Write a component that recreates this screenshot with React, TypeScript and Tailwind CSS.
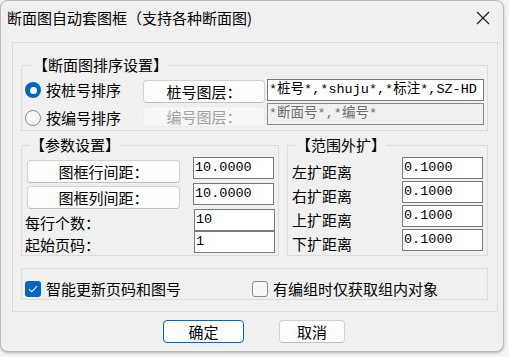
import React from "react";

const cjk = "font-['Noto_Sans_CJK_SC',sans-serif]";
const mono = "font-['Liberation_Mono','Noto_Sans_CJK_SC',monospace]";

const btn =
  "flex items-center justify-center rounded-[4px] border border-[#d2d2d2] border-b-[#c0c0c0] bg-[#fdfdfd] text-[15px] leading-[20px] text-black";

const inputBox =
  "h-[22px] border border-[#7a7a7a] bg-white pl-[1px] text-[13.5px] leading-[19px] text-black whitespace-nowrap overflow-hidden";

const Radio = ({ checked }: { checked?: boolean }) =>
  checked ? (
    <span className="flex h-4 w-4 shrink-0 items-center justify-center rounded-full bg-[#0067c0]">
      <span className="h-[7px] w-[7px] rounded-full bg-white" />
    </span>
  ) : (
    <span className="h-4 w-4 shrink-0 rounded-full border border-[#8a8a8a] bg-[#f7f7f7]" />
  );

const Check = ({ checked }: { checked?: boolean }) =>
  checked ? (
    <span className="flex h-4 w-4 shrink-0 items-center justify-center rounded-[3px] bg-[#0067c0]">
      <svg width="10" height="8" viewBox="0 0 10 8" fill="none">
        <path d="M1 4.2 L3.7 6.8 L9 1.2" stroke="white" strokeWidth="1.1" />
      </svg>
    </span>
  ) : (
    <span className="h-4 w-4 shrink-0 rounded-[3px] border border-[#8a8a8a] bg-[#f7f7f7]" />
  );

const Legend = ({ children }: { children: React.ReactNode }) => (
  <legend className="ml-[8px] h-[20px] px-0 text-[15px] leading-[20px] text-black">{children}</legend>
);

export default function App() {
  return (
    <div className={`min-h-screen bg-[#f4f4f4] ${cjk}`}>
      <div className="flex h-[352px] w-[504px] flex-col overflow-hidden rounded-[8px] border border-[#b9b9b9] bg-[#f0f0f0] shadow-[0_1px_3px_rgba(0,0,0,0.25)]">
        {/* title bar */}
        <div className="flex h-[33px] shrink-0 items-center justify-between pl-[6px] pr-[12px]">
          <span className="text-[15px] leading-[20px] text-black">断面图自动套图框（支持各种断面图)</span>
          <svg width="14" height="14" viewBox="0 0 14 14" className="mr-[1px]">
            <path d="M1 1 L13 13 M13 1 L1 13" stroke="#1a1a1a" strokeWidth="1.1" />
          </svg>
        </div>

        {/* main panel */}
        <div className="ml-[11px] mt-[8px] flex h-[270px] w-[486px] flex-col border border-[#dcdcdc] pl-[8px] pt-[12px]">
          {/* sort settings */}
          <fieldset className="w-[467px] border border-[#dcdcdc] pb-[3px] pl-[3px]">
            <Legend>【断面图排序设置】</Legend>
            <div className="mt-[4px] flex h-[24px] items-start">
              <div className="flex h-[22px] w-[118px] items-center gap-[5px]">
                <Radio checked />
                <span className="text-[15px] leading-[20px]">按桩号排序</span>
              </div>
              <div className={`${btn} mt-[1px] h-[23px] w-[122px]`}>桩号图层：</div>
              <div className={`${inputBox} ${mono} ml-[2px] w-[217px]`}>*桩号*,*shuju*,*标注*,SZ-HD</div>
            </div>
            <div className="flex h-[24px] items-start">
              <div className="flex h-[30px] w-[118px] items-center gap-[5px]">
                <Radio />
                <span className="text-[15px] leading-[20px]">按编号排序</span>
              </div>
              <div className="mt-[3px] flex h-[21px] w-[122px] items-center justify-center rounded-[4px] border border-[#ececec] bg-[#f6f6f6] text-[15px] leading-[20px] text-[#a2a2a2]">
                编号图层：
              </div>
              <div className={`${mono} ml-[2px] h-[22px] w-[217px] border border-[#8a8a8a] bg-[#f0f0f0] pl-[1px] text-[13.5px] leading-[19px] text-[#6d6d6d]`}>
                *断面号*,*编号*
              </div>
            </div>
          </fieldset>

          <div className="mt-[4px] flex gap-[8px]">
            {/* params */}
            <fieldset className="h-[121px] w-[258px] border border-[#dcdcdc]">
              <Legend>【参数设置】</Legend>
              <div className="mt-[2px] flex h-[26px] items-start">
                <div className={`${btn} ml-[5px] mt-[3px] h-[23px] w-[153px]`}>图框行间距：</div>
                <div className={`${inputBox} ${mono} ml-[13px] w-[81px]`}>10.0000</div>
              </div>
              <div className="flex h-[26px] items-start">
                <div className={`${btn} ml-[5px] mt-[3px] h-[23px] w-[153px]`}>图框列间距：</div>
                <div className={`${inputBox} ${mono} ml-[13px] w-[81px]`}>10.0000</div>
              </div>
              <div className="flex h-[22px] items-start">
                <span className="ml-[3px] h-[22px] w-[169px] pt-[3px] text-[15px] leading-[22px]">每行个数：</span>
                <div className={`${inputBox} ${mono} w-[81px]`}>10</div>
              </div>
              <div className="flex h-[22px] items-start">
                <span className="ml-[3px] h-[22px] w-[169px] pt-[3px] text-[15px] leading-[22px]">起始页码：</span>
                <div className={`${inputBox} ${mono} w-[81px]`}>1</div>
              </div>
            </fieldset>

            {/* range */}
            <fieldset className="flex h-[121px] w-[201px] flex-col gap-[2px] border border-[#dcdcdc]">
              <Legend>【范围外扩】</Legend>
              {["左扩距离", "右扩距离", "上扩距离", "下扩距离"].map((t, i) => (
                <div key={t} className={`flex h-[22px] items-start ${i === 0 ? "mt-[2px]" : ""}`}>
                  <span className="ml-[4px] h-[22px] w-[110px] pt-[4px] text-[15px] leading-[22px]">{t}</span>
                  <div className={`${inputBox} ${mono} w-[81px]`}>0.1000</div>
                </div>
              ))}
            </fieldset>
          </div>

          {/* options */}
          <fieldset className="mt-[12px] flex h-[32px] w-[467px] items-start border border-[#dcdcdc] pl-[3px] pt-[12px]">
            <div className="flex w-[227px] items-center gap-[5px]">
              <Check checked />
              <span className="text-[15px] leading-[16px]">智能更新页码和图号</span>
            </div>
            <div className="flex items-center gap-[5px]">
              <Check />
              <span className="text-[15px] leading-[16px]">有编组时仅获取组内对象</span>
            </div>
          </fieldset>
        </div>

        {/* buttons */}
        <div className="ml-[162px] mt-[8px] flex gap-[35px]">
          <div className="flex h-[23px] w-[81px] items-center justify-center rounded-[4px] border border-[#0067c0] bg-[#fdfdfd] text-[15px] leading-[20px]">
            确定
          </div>
          <div className={`${btn} h-[23px] w-[66px]`}>取消</div>
        </div>
      </div>
    </div>
  );
}
